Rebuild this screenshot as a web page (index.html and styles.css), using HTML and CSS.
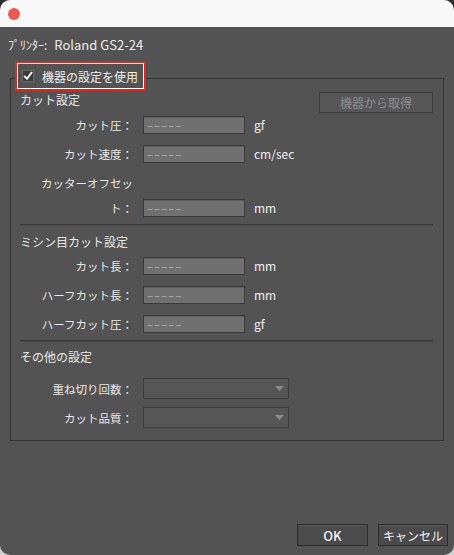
FILE: index.html
```html
<!DOCTYPE html>
<html lang="ja">
<head>
<meta charset="utf-8">
<title>設定</title>
<link rel="stylesheet" href="styles.css">
</head>
<body>
<div class="window">
  <div class="titlebar"><span class="close"></span></div>
  <div class="content">
    <div class="printer"><span class="printer-key">ﾌﾟﾘﾝﾀｰ:</span><span class="printer-name">Roland GS2-24</span></div>
    <div class="group">
      <div class="legend">
        <span class="check"><svg width="10" height="10" viewBox="0 0 10 10"><path d="M1.6 5.4 L4 7.8 L8.6 1.6" fill="none" stroke="#ffffff" stroke-width="1.8" stroke-linecap="round" stroke-linejoin="round"/></svg></span>
        <span class="legend-text">機器の設定を使用</span>
      </div>
      <div class="section-head first">
        <span class="head">カット設定</span>
        <span class="btn-get">機器から取得</span>
      </div>
      <div class="row r-first"><span class="label">カット圧：</span><span class="field">–––––</span><span class="unit">gf</span></div>
      <div class="row r-next"><span class="label">カット速度：</span><span class="field">–––––</span><span class="unit">cm/sec</span></div>
      <div class="row tall"><span class="label">カッターオフセッ<br>ト：</span><span class="field">–––––</span><span class="unit">mm</span></div>
      <div class="sep s1"></div>
      <div class="section-head mid"><span class="head">ミシン目カット設定</span></div>
      <div class="row r-first2"><span class="label">カット長：</span><span class="field">–––––</span><span class="unit">mm</span></div>
      <div class="row r-next"><span class="label">ハーフカット長：</span><span class="field">–––––</span><span class="unit">mm</span></div>
      <div class="row r-next"><span class="label">ハーフカット圧：</span><span class="field">–––––</span><span class="unit">gf</span></div>
      <div class="sep s2"></div>
      <div class="section-head mid"><span class="head">その他の設定</span></div>
      <div class="row sel-first"><span class="label">重ね切り回数：</span><span class="select"><svg width="9" height="5" viewBox="0 0 9 5"><path d="M0 0 H9 L4.5 5 Z" fill="#8b8b8b"/></svg></span></div>
      <div class="row sel-next"><span class="label">カット品質：</span><span class="select"><svg width="9" height="5" viewBox="0 0 9 5"><path d="M0 0 H9 L4.5 5 Z" fill="#8b8b8b"/></svg></span></div>
    </div>
    <div class="footer">
      <span class="btn ok">OK</span>
      <span class="btn cancel">キャンセル</span>
    </div>
  </div>
</div>
</body>
</html>
```
FILE: styles.css
```css
* { box-sizing: border-box; }
html, body { margin: 0; height: 100%; }
body {
  background: linear-gradient(#2e2e2e 0 50%, #cfcfcf 50% 100%);
  font-family: "Noto Sans CJK JP", "Noto Sans", sans-serif;
  color: #e6e6e6;
}
.window {
  width: 454px;
  height: 555px;
  border-radius: 10px;
  overflow: hidden;
  display: flex;
  flex-direction: column;
  background: #535353;
}
.titlebar {
  height: 27px;
  flex: none;
  background: #f8f8f8;
  display: flex;
  align-items: center;
  padding-left: 8px;
}
.close {
  width: 12px;
  height: 12px;
  border-radius: 50%;
  background: #ec5b53;
}
.content {
  flex: 1;
  display: flex;
  flex-direction: column;
  padding-top: 9px;
}
.printer {
  height: 18px;
  line-height: 18px;
  padding-left: 8px;
  color: #ececec;
  display: flex;
  align-items: center;
}
.printer-key { font-size: 12px; }
.printer-name { font-size: 13px; margin-left: 7px; }
.group {
  margin: 24px 10px 0;
  border: 1px solid #343434;
  padding: 0 10px 12px 9px;
  display: flex;
  flex-direction: column;
}
.legend {
  align-self: flex-start;
  margin: -18px 0 0 -5px;
  height: 30px;
  border: 2px solid #d8281f;
  box-shadow: inset 0 0 0 1px #ffffff;
  background: #535353;
  display: flex;
  align-items: center;
  gap: 8px;
  padding: 0 6px 0 5px;
}
.check {
  width: 12px;
  height: 12px;
  background: #3b3b3b;
  border: 1px solid #6a6a6a;
  display: flex;
  align-items: center;
  justify-content: center;
}
.legend-text {
  font-size: 12px;
  color: #f0f0f0;
}
.section-head {
  display: flex;
  justify-content: space-between;
  align-items: flex-start;
}
.section-head.first { margin-top: 1px; height: 21px; }
.section-head.mid { margin-top: 8px; }
.section-head.mid + .row { margin-top: 7px; }
.head {
  font-size: 12px;
  line-height: 16px;
  color: #e8e8e8;
}
.btn-get {
  width: 114px;
  height: 21px;
  border: 1px solid #3e3e3e;
  background: #575757;
  color: #8d8d8d;
  font-size: 12px;
  display: flex;
  align-items: center;
  justify-content: center;
}
.row {
  display: flex;
  align-items: center;
  height: 18px;
}
.label {
  width: 113px;
  margin-right: 10px;
  text-align: right;
  font-size: 11.5px;
  line-height: 18px;
  color: #e8e8e8;
  flex: none;
}
.field {
  width: 102px;
  height: 18px;
  flex: none;
  background: #707070;
  border: 1px solid #3a3a3a;
  box-shadow: inset 0 1px 0 #5f5f5f;
  color: #b4b4b4;
  font-size: 11px;
  line-height: 16px;
  padding-left: 3px;
  letter-spacing: 1.2px;
}
.unit {
  margin-left: 9px;
  font-size: 12px;
  line-height: 18px;
  color: #f0f0f0;
}
.r-first { margin-top: 3px; }
.r-next { margin-top: 11px; }
.row.tall {
  height: auto;
  align-items: flex-end;
  margin-top: 8px;
}
.tall .label { line-height: 25px; }
.tall .field, .tall .unit { margin-bottom: 4px; }
.sep {
  height: 2px;
  border-top: 1px solid #383838;
  border-bottom: 1px solid #4b4b4b;
}
.s1 { margin-top: 3px; }
.s2 { margin-top: 7px; }
.s2 + .section-head.mid { margin-top: 7px; }
.select {
  width: 146px;
  height: 21px;
  flex: none;
  border: 1px solid #3e3e3e;
  background: #565656;
  display: flex;
  align-items: center;
  justify-content: flex-end;
  padding-right: 4px;
}
.row.sel-first, .row.sel-next { height: 21px; }
.section-head.mid + .row.sel-first { margin-top: 13px; }
.sel-next { margin-top: 8px; }
.footer {
  margin-top: auto;
  display: flex;
  justify-content: flex-end;
  gap: 10px;
  padding: 0 6px 9px 0;
}
.btn {
  height: 22px;
  border: 1px solid #2c2c2c;
  background: #4b4b4b;
  box-shadow: inset 0 1px 0 #5a5a5a;
  color: #f2f2f2;
  display: flex;
  align-items: center;
  justify-content: center;
}
.ok { width: 71px; font-size: 13px; font-weight: 500; }
.cancel { width: 70px; font-size: 12px; }
```
